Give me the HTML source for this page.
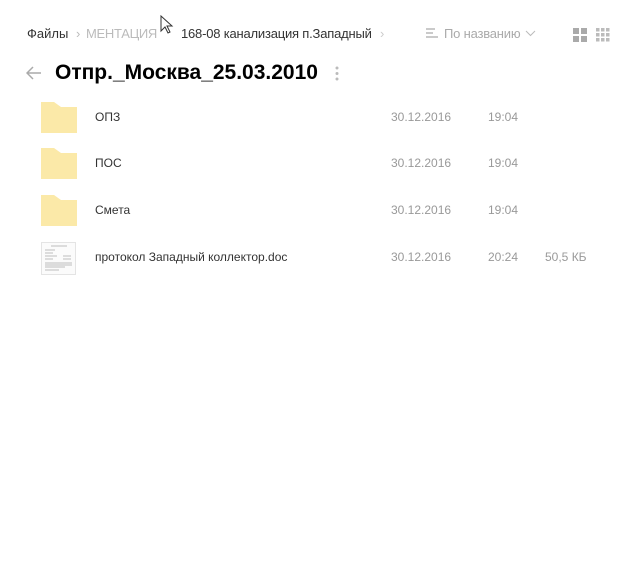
<!DOCTYPE html>
<html><head><meta charset="utf-8"><style>
body{margin:0;width:617px;height:588px;background:#fff;font-family:"Liberation Sans",sans-serif;position:relative;overflow:hidden}
.a{position:absolute;white-space:nowrap}
.bc{top:26px;font-size:13px;color:#333}
.row{font-size:12px;color:#333}
.g{color:#999}
.f{position:absolute;left:41px;width:36px;height:31px}
</style></head><body>
<div class="a bc" style="left:27px">Файлы</div>
<div class="a bc g" style="left:76px;color:#bbb">›</div>
<div class="a bc" style="left:86px;color:#bbb;letter-spacing:-0.3px">МЕНТАЦИЯ</div>
<div class="a bc" style="left:181px;letter-spacing:-0.2px">168-08 канализация п.Западный</div>
<div class="a bc" style="left:380px;color:#ccc">›</div>
<svg class="a" style="left:426px;top:28px" width="12" height="12"><path d="M0 1h9M0 5h7M0 9h12" stroke="#aaa" stroke-width="1.3"/></svg>
<div class="a bc" style="left:444px;color:#aaa;letter-spacing:-0.2px">По названию</div>
<svg class="a" style="left:525px;top:30px" width="11" height="8"><path d="M1 1l4.5 4.5L10 1" stroke="#bbb" fill="none"/></svg>
<svg class="a" style="left:573px;top:28px" width="40" height="15">
<g fill="#aaa"><rect x="0" y="0" width="6" height="6"/><rect x="8" y="0" width="6" height="6"/><rect x="0" y="8" width="6" height="6"/><rect x="8" y="8" width="6" height="6"/></g>
<g fill="#bbb"><rect x="23" y="0" width="3.5" height="3.5"/><rect x="28" y="0" width="3.5" height="3.5"/><rect x="33" y="0" width="3.5" height="3.5"/><rect x="23" y="5" width="3.5" height="3.5"/><rect x="28" y="5" width="3.5" height="3.5"/><rect x="33" y="5" width="3.5" height="3.5"/><rect x="23" y="10" width="3.5" height="3.5"/><rect x="28" y="10" width="3.5" height="3.5"/><rect x="33" y="10" width="3.5" height="3.5"/></g></svg>
<svg class="a" style="left:160px;top:15px" width="14" height="22"><path d="M1 1v15l4-4 3 6 2-1-3-6h5z" fill="#fff" stroke="#333"/></svg>
<svg class="a" style="left:26px;top:66px" width="16" height="14"><path d="M15 7H2M7 1L1 7l6 6" stroke="#aaa" stroke-width="1.5" fill="none"/></svg>
<div class="a" style="left:55px;top:61px;font-size:21px;font-weight:bold;color:#000">Отпр._Москва_25.03.2010</div>
<svg class="a" style="left:335px;top:66px" width="4" height="15"><circle cx="2" cy="2" r="1.5" fill="#bbb"/><circle cx="2" cy="7.5" r="1.5" fill="#bbb"/><circle cx="2" cy="13" r="1.5" fill="#bbb"/></svg>

<svg class="f" style="top:102px" viewBox="0 0 36 31"><path d="M0 0h13l7 5h16v26H0z" fill="#fbe9a8"/></svg>
<svg class="f" style="top:148px" viewBox="0 0 36 31"><path d="M0 0h13l7 5h16v26H0z" fill="#fbe9a8"/></svg>
<svg class="f" style="top:195px" viewBox="0 0 36 31"><path d="M0 0h13l7 5h16v26H0z" fill="#fbe9a8"/></svg>
<svg class="a" style="left:41px;top:242px" width="35" height="33"><rect x="0.5" y="0.5" width="34" height="32" fill="#fbfbfb" stroke="#e4e4e4"/>
<g stroke="#aaa" stroke-width="0.8"><path d="M10 4h16M4 8h10M4 11h8M4 14h12M22 14h8M4 17h8M22 17h8M4 21h27M4 23h27M4 25h20M4 28h14"/></g></svg>

<div class="a row" style="left:95px;top:110px">ОПЗ</div>
<div class="a row" style="left:95px;top:156px">ПОС</div>
<div class="a row" style="left:95px;top:203px">Смета</div>
<div class="a row" style="left:95px;top:250px">протокол Западный коллектор.doc</div>
<div class="a row g" style="left:391px;top:110px">30.12.2016</div>
<div class="a row g" style="left:391px;top:156px">30.12.2016</div>
<div class="a row g" style="left:391px;top:203px">30.12.2016</div>
<div class="a row g" style="left:391px;top:250px">30.12.2016</div>
<div class="a row g" style="left:488px;top:110px">19:04</div>
<div class="a row g" style="left:488px;top:156px">19:04</div>
<div class="a row g" style="left:488px;top:203px">19:04</div>
<div class="a row g" style="left:488px;top:250px">20:24</div>
<div class="a row g" style="left:545px;top:250px">50,5 КБ</div>
</body></html>
